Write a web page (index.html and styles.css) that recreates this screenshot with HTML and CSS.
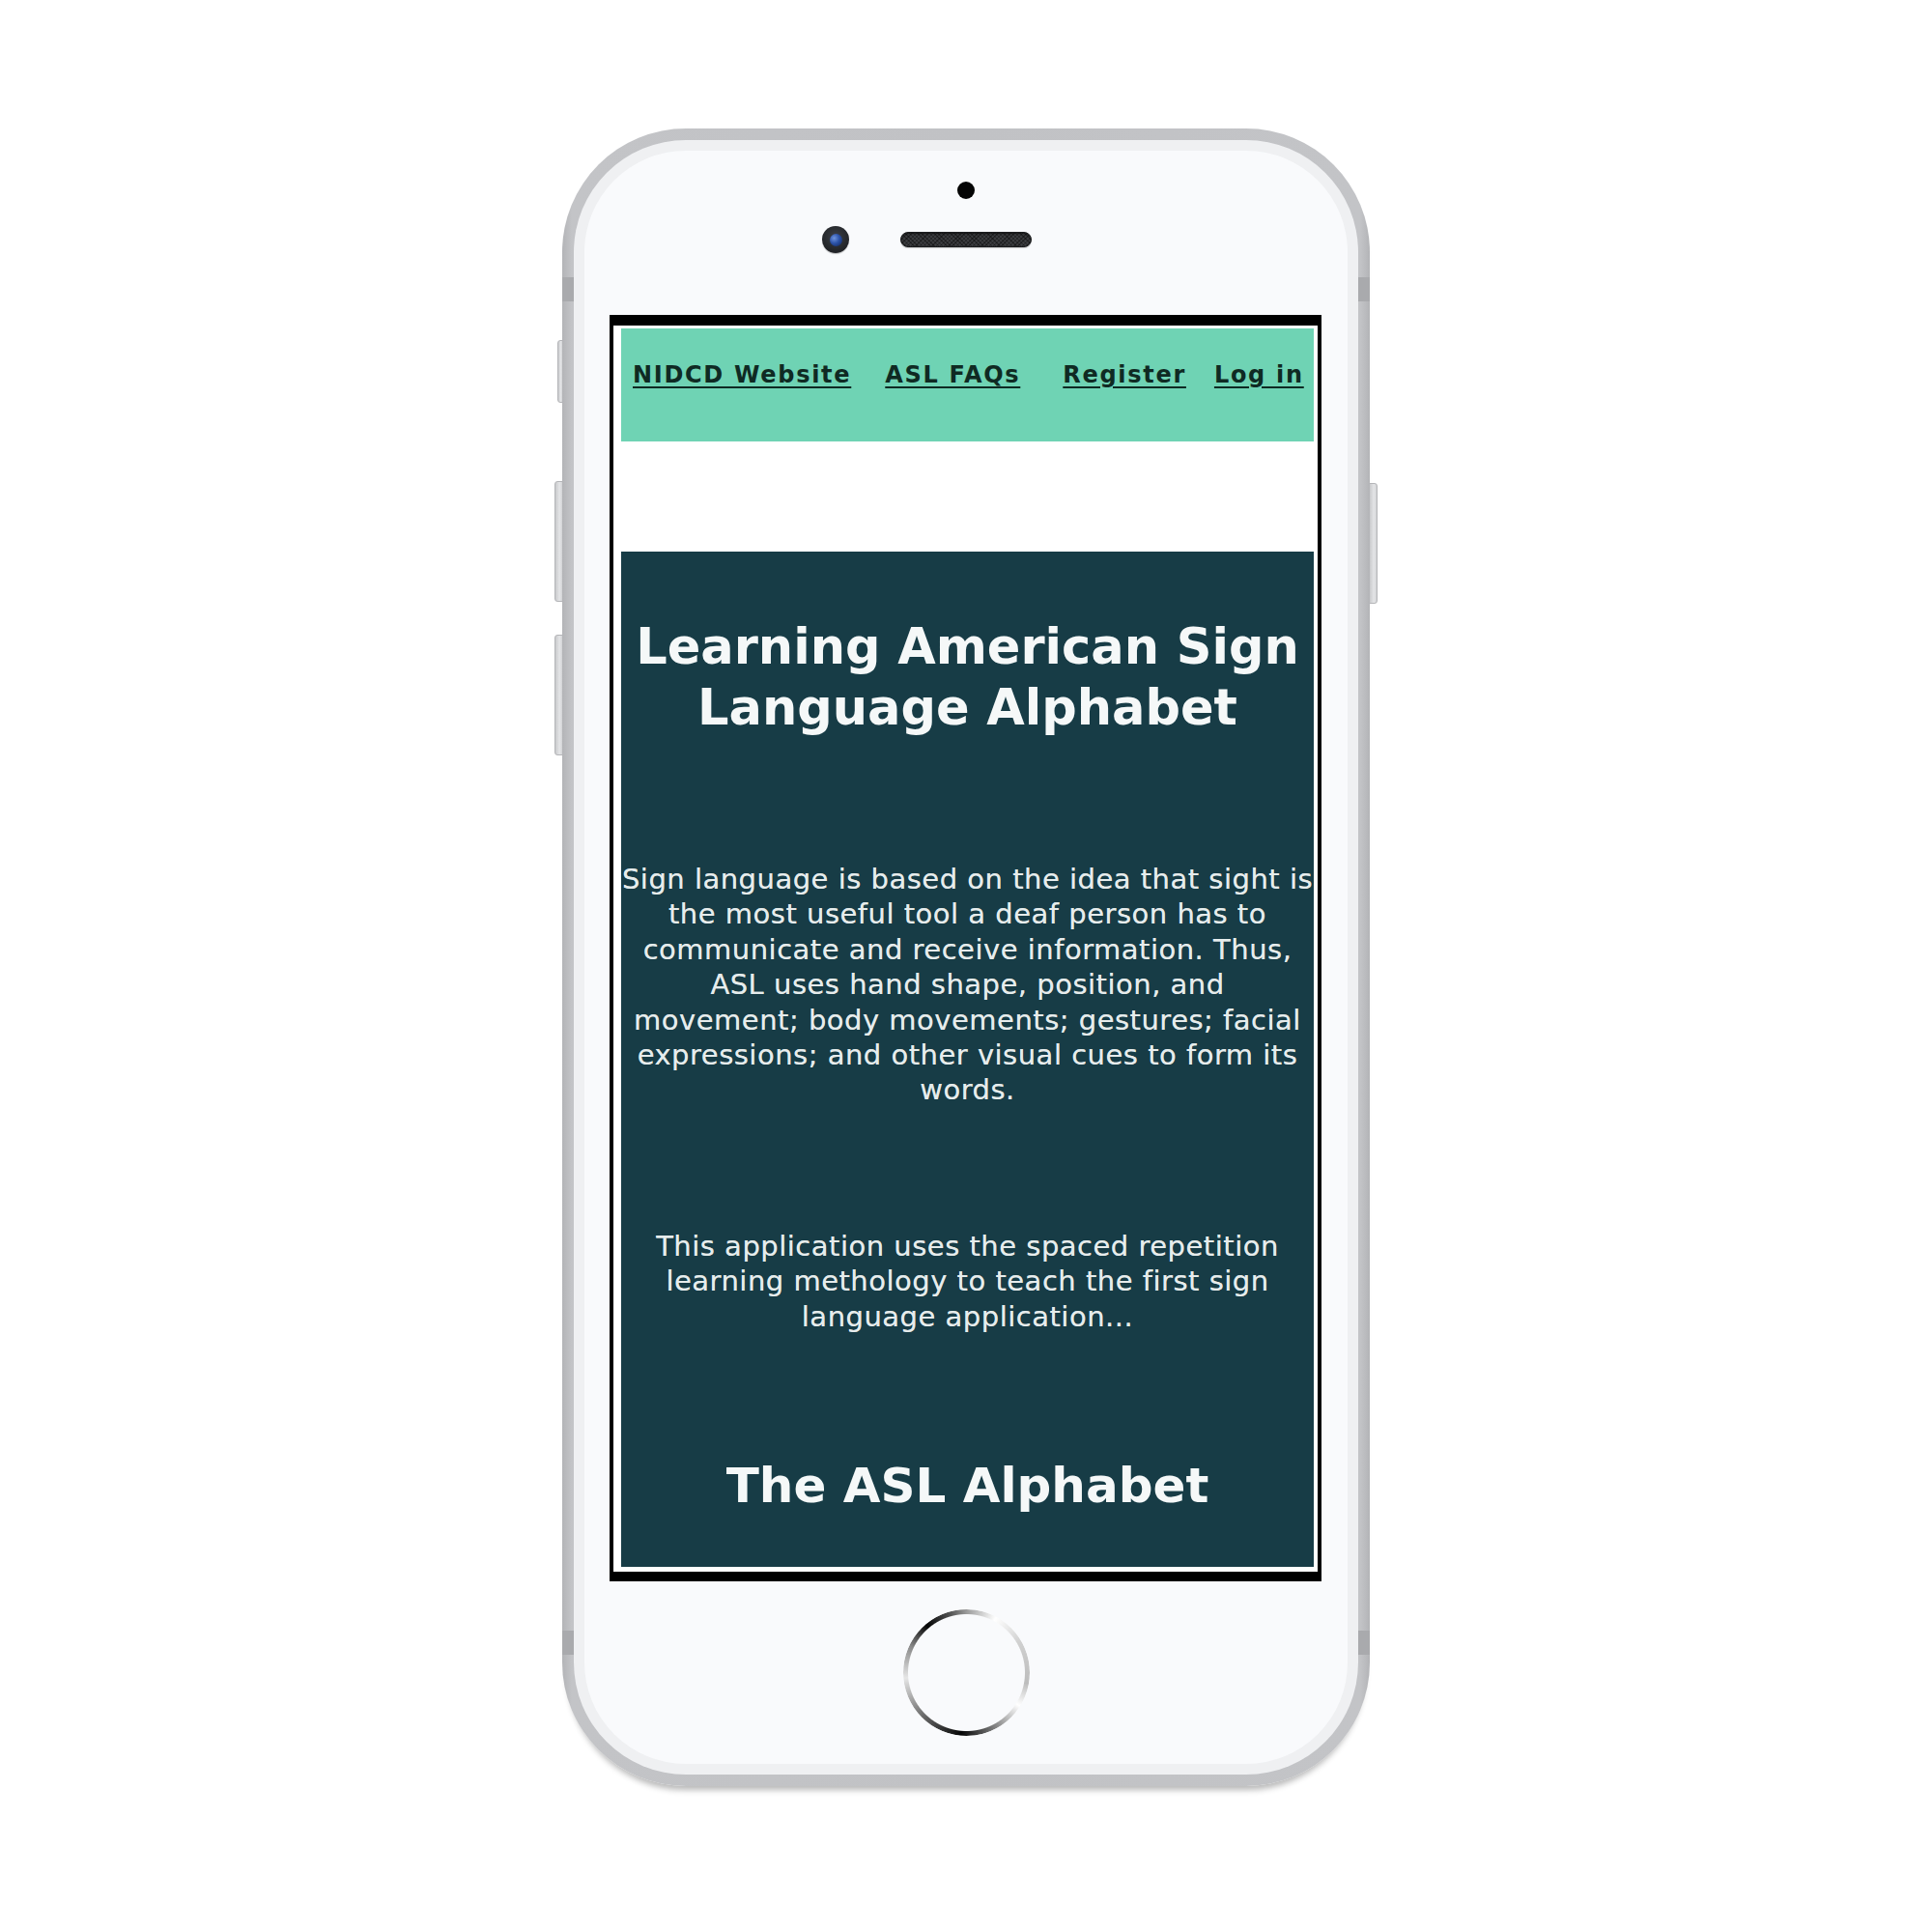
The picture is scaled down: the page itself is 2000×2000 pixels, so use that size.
FILE: index.html
```html
<!DOCTYPE html>
<html lang="en">
<head>
<meta charset="utf-8">
<title>ASL App</title>
<link rel="stylesheet" href="styles.css">
</head>
<body>
<div class="phone">
  <span class="btn btn-mute"></span>
  <span class="btn btn-volup"></span>
  <span class="btn btn-voldown"></span>
  <span class="btn btn-power"></span>
  <span class="band band-tl"></span>
  <span class="band band-tr"></span>
  <span class="band band-bl"></span>
  <span class="band band-br"></span>
  <div class="bezel">
    <div class="face">
      <div class="sensor"></div>
      <div class="earpiece">
        <div class="cam-slot"><div class="camera"><div class="lens"></div></div></div>
        <div class="speaker"></div>
        <div></div>
      </div>
      <div class="screen">
        <div class="viewport">
          <nav class="nav">
            <a class="nav-link l1" href="#">NIDCD Website</a>
            <a class="nav-link l2" href="#">ASL FAQs</a>
            <a class="nav-link l3" href="#">Register</a>
            <a class="nav-link l4" href="#">Log in</a>
          </nav>
          <div class="spacer"></div>
          <main class="hero">
            <h1 class="title">Learning American Sign<br>Language Alphabet</h1>
            <p class="text text-1">Sign language is based on the idea that sight is<br>the most useful tool a deaf person has to<br>communicate and receive information. Thus,<br>ASL uses hand shape, position, and<br>movement; body movements; gestures; facial<br>expressions; and other visual cues to form its<br>words.</p>
            <p class="text text-2">This application uses the spaced repetition<br>learning methology to teach the first sign<br>language application...</p>
            <h2 class="subtitle">The ASL Alphabet</h2>
          </main>
        </div>
      </div>
      <div class="home"></div>
    </div>
  </div>
</div>
</body>
</html>
```

FILE: styles.css
```css
* { box-sizing: border-box; }

html, body {
  margin: 0;
  padding: 0;
  background: #ffffff;
}

body {
  width: 2000px;
  height: 2000px;
  overflow: hidden;
  font-family: "DejaVu Sans", "Liberation Sans", sans-serif;
}

.phone {
  position: relative;
  width: 836px;
  margin: 133px auto 0;
  padding: 12px;
  border-radius: 128px;
  background: linear-gradient(90deg, #b3b4b7 0%, #c3c4c7 1.2%, #c1c2c5 50%, #c3c4c7 98.8%, #b3b4b7 100%);
  box-shadow: 0 9px 6px -5px rgba(0, 0, 0, 0.28);
}

.btn {
  position: absolute;
  background: linear-gradient(90deg, #c9cacc, #e4e5e7 60%, #d2d3d5);
  border: 1px solid #b4b5b8;
}

.btn-mute {
  left: -5px;
  top: 219px;
  width: 6px;
  height: 65px;
  border-radius: 3px 0 0 3px;
}

.btn-volup {
  left: -8px;
  top: 365px;
  width: 9px;
  height: 125px;
  border-radius: 3px 0 0 3px;
}

.btn-voldown {
  left: -8px;
  top: 524px;
  width: 9px;
  height: 125px;
  border-radius: 3px 0 0 3px;
}

.btn-power {
  right: -8px;
  top: 367px;
  width: 9px;
  height: 125px;
  border-radius: 0 3px 3px 0;
}

.band {
  position: absolute;
  width: 13px;
  height: 25px;
  background: #a9aaad;
}

.band-tl { left: 0; top: 154px; }
.band-tr { right: 0; top: 154px; }
.band-bl { left: 0; top: 1555px; }
.band-br { right: 0; top: 1555px; }

.bezel {
  position: relative;
  padding: 11px;
  border-radius: 116px;
  background: #eff0f2;
}

.face {
  display: flex;
  flex-direction: column;
  align-items: center;
  padding: 32px 0 29px;
  border-radius: 105px;
  background: #f9fafc;
}

.sensor {
  width: 18px;
  height: 18px;
  border-radius: 50%;
  background: #050505;
}

.earpiece {
  display: grid;
  grid-template-columns: 1fr auto 1fr;
  align-items: start;
  width: 100%;
  margin-top: 28px;
}

.cam-slot {
  display: flex;
  justify-content: flex-end;
  padding-right: 53px;
}

.camera {
  display: flex;
  align-items: center;
  justify-content: center;
  width: 28px;
  height: 28px;
  border-radius: 50%;
  background: radial-gradient(circle at 50% 40%, #3d4046 0%, #25272b 60%, #15161a 100%);
  box-shadow: 0 1px 1px rgba(0, 0, 0, 0.25);
}

.lens {
  width: 13px;
  height: 13px;
  border-radius: 50%;
  background: radial-gradient(circle at 35% 35%, #6f93dd 0%, #2b52a8 45%, #0e2254 100%);
}

.speaker {
  width: 136px;
  height: 16px;
  margin-top: 6px;
  border-radius: 8px;
  background-color: #3a3b3e;
  background-image: repeating-linear-gradient(45deg, rgba(0,0,0,0.35) 0 1px, transparent 1px 3px),
                    repeating-linear-gradient(-45deg, rgba(0,0,0,0.35) 0 1px, transparent 1px 3px);
  border: 1px solid #1c1d1f;
  box-shadow: inset 0 1px 2px rgba(0,0,0,0.6), 0 1px 1px rgba(0,0,0,0.2);
}

.screen {
  width: 737px;
  margin-top: 64px;
  margin-left: -1px;
  padding: 11px 4px 10px 4px;
  background: #000000;
}

.viewport {
  display: flex;
  flex-direction: column;
  padding: 3px 4px 5px 8px;
  background: #ffffff;
}

.nav {
  display: flex;
  align-items: flex-start;
  height: 117px;
  padding: 35px 0 0 12px;
  background: #6fd3b4;
}

.nav-link {
  font-size: 24px;
  line-height: 26px;
  font-weight: bold;
  letter-spacing: 1.7px;
  color: #0f2a23;
  text-decoration: underline;
  text-decoration-thickness: 2px;
  text-underline-offset: 4px;
  white-space: nowrap;
}

.l2 { margin-left: 35px; }
.l3 { margin-left: 44px; }
.l4 { margin-left: 29px; }

.spacer {
  height: 114px;
}

.hero {
  display: flex;
  flex-direction: column;
  align-items: center;
  padding: 67px 0 54px;
  background: #173c46;
  color: #eef3f4;
  text-align: center;
}

.title {
  margin: 0;
  font-size: 51px;
  line-height: 63px;
  font-weight: bold;
  color: #f5f8f8;
  white-space: nowrap;
}

.text {
  margin: 0;
  font-size: 29px;
  line-height: 36.4px;
  letter-spacing: 0.5px;
  color: #e6ecec;
  text-shadow: 0 0 0.6px rgba(230, 236, 236, 0.8);
  white-space: nowrap;
}

.text-1 { margin-top: 128px; }
.text-2 { margin-top: 125px; }

.subtitle {
  margin: 126.7px 0 0;
  font-size: 50px;
  line-height: 60px;
  font-weight: bold;
  color: #f5f8f8;
  white-space: nowrap;
}

.home {
  width: 131px;
  height: 131px;
  margin-top: 29px;
  border-radius: 50%;
  background: conic-gradient(from 0deg,
    #9a9a9a 0deg, #ffffff 28deg, #d0d0d0 60deg, #bdbdbd 100deg,
    #ffffff 122deg, #8a8a8a 150deg, #050505 185deg, #6a6a6a 225deg,
    #e6e6e6 265deg, #8a8a8a 295deg, #050505 320deg, #555555 345deg, #9a9a9a 360deg);
  -webkit-mask: radial-gradient(circle, transparent 60px, #000 61px);
  mask: radial-gradient(circle, transparent 60px, #000 61px);
}
```
